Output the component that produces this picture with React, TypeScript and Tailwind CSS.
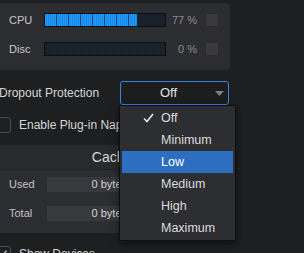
import React from 'react';

const METERS = [
  { label: 'CPU', value: 77 },
  { label: 'Disc', value: 0 },
];

const LEVELS = ['Off', 'Minimum', 'Low', 'Medium', 'High', 'Maximum'];

function Meter({ label, value }: { label: string; value: number }) {
  return (
    <div className="flex items-center h-[14px]">
      <div className="w-[44px] pl-[9px] text-[11px] text-[#c8c8c8]">{label}</div>
      <div className="relative w-[122px] h-[14px] border border-[#0b0e12] bg-[repeating-linear-gradient(90deg,#1b242e_0_1px,#172029_1px_2px)]">
        <div
          className="h-full bg-[repeating-linear-gradient(90deg,transparent_0_11px,#0c4278_11px_12px),repeating-linear-gradient(90deg,#2398f5_0_1px,#168ae9_1px_2px)]"
          style={{ width: `${value}%` }}
        />
      </div>
      <div className="w-[31px] text-right text-[11px] text-[#8c8c8c]">{value} %</div>
      <div className="ml-[8px] w-[14px] h-[14px] bg-[#3a3a3b] border border-[#2a2a2b]" />
    </div>
  );
}

function Checkbox({ checked }: { checked?: boolean }) {
  return (
    <div className="w-[16px] h-[16px] shrink-0 rounded-[3px] border border-[#4c4d50] bg-[#1f2022] flex items-center justify-end pr-[1px] text-[12px] leading-none text-[#d0d0d0]">
      {checked ? '✓' : null}
    </div>
  );
}

function StatRow({ label }: { label: string }) {
  return (
    <div className="flex items-center h-[15px]">
      <div className="w-[47px] pl-[9px] text-[11px] text-[#c4c4c4]">{label}</div>
      <div className="w-[86px] h-[15px] bg-[#38393c] flex items-center justify-end pr-[6px] text-[11px] text-[#d4d4d4]">0 bytes</div>
    </div>
  );
}

export default function App() {
  return (
    <div
      className="relative w-[304px] h-[253px] overflow-hidden bg-[#1e1f21] pt-[3px]"
      style={{ fontFamily: '"Liberation Sans", Arial, sans-serif' }}
    >
      {/* performance panel */}
      <div className="w-[230px] h-[67px] rounded-r-[5px] bg-[#2c2d30] pt-[10px] flex flex-col gap-[15px]">
        {METERS.map((m) => (
          <Meter key={m.label} label={m.label} value={m.value} />
        ))}
      </div>

      <div className="ml-[-5px]">
        {/* dropout protection */}
        <div className="flex items-center mt-[11px] h-[24px]">
          <div className="w-[125px] pl-[4px] text-[12px] text-[#d6d6d6]">Dropout Protection</div>
          <div className="relative w-[109px] h-[24px] rounded-[3px] border border-[#3a84da] bg-[#1c1d1f] flex items-center justify-center pr-[12px] text-[13px] text-[#e4e4e4]">
            Off
            <svg className="absolute right-[4px] top-[9px]" width="9" height="5" viewBox="0 0 9 5">
              <path d="M0 0H9L4.5 5Z" fill="#7e7f82" />
            </svg>
          </div>
        </div>

        <div className="flex items-center gap-[8px] mt-[12px] h-[16px]">
          <Checkbox />
          <span className="text-[12px] text-[#d6d6d6] whitespace-nowrap">Enable Plug-in Nap</span>
        </div>
      </div>

      {/* cache panel */}
      <div className="mt-[12px] w-[230px] bg-[#2c2d30]">
        <div className="h-[25px] bg-[#292a2d] border-b border-[#202123] flex items-center justify-center pr-[6px] text-[14px] text-[#d8d8d8]">
          Cache
        </div>
        <div className="pt-[7px] pb-[12px] flex flex-col gap-[14px]">
          <StatRow label="Used" />
          <StatRow label="Total" />
        </div>
      </div>

      <div className="ml-[-5px] mt-[12px] flex items-center gap-[8px]">
        <Checkbox checked />
        <span className="text-[12px] text-[#d6d6d6]">Show Devices</span>
      </div>

      {/* open dropdown menu */}
      <div className="absolute left-[119px] top-[105px] w-[117px] border border-[#0d0d0e] bg-[#2d2e31] px-[2px] py-[1px] shadow-[0_3px_8px_rgba(0,0,0,0.5)]">
        {LEVELS.map((lvl) => (
          <div
            key={lvl}
            className={`relative h-[22px] flex items-center pl-[39px] text-[12.5px] ${lvl === 'Low' ? 'bg-[#2e6ec0] text-white' : 'text-[#dcdcdc]'}`}
          >
            {lvl === 'Off' && (
              <svg className="absolute left-[21px] top-[6px]" width="11" height="10" viewBox="0 0 11 10">
                <path d="M1 5.5L4 8.5L10 1" fill="none" stroke="#e6e6e6" strokeWidth="1.6" />
              </svg>
            )}
            {lvl}
          </div>
        ))}
      </div>
    </div>
  );
}
